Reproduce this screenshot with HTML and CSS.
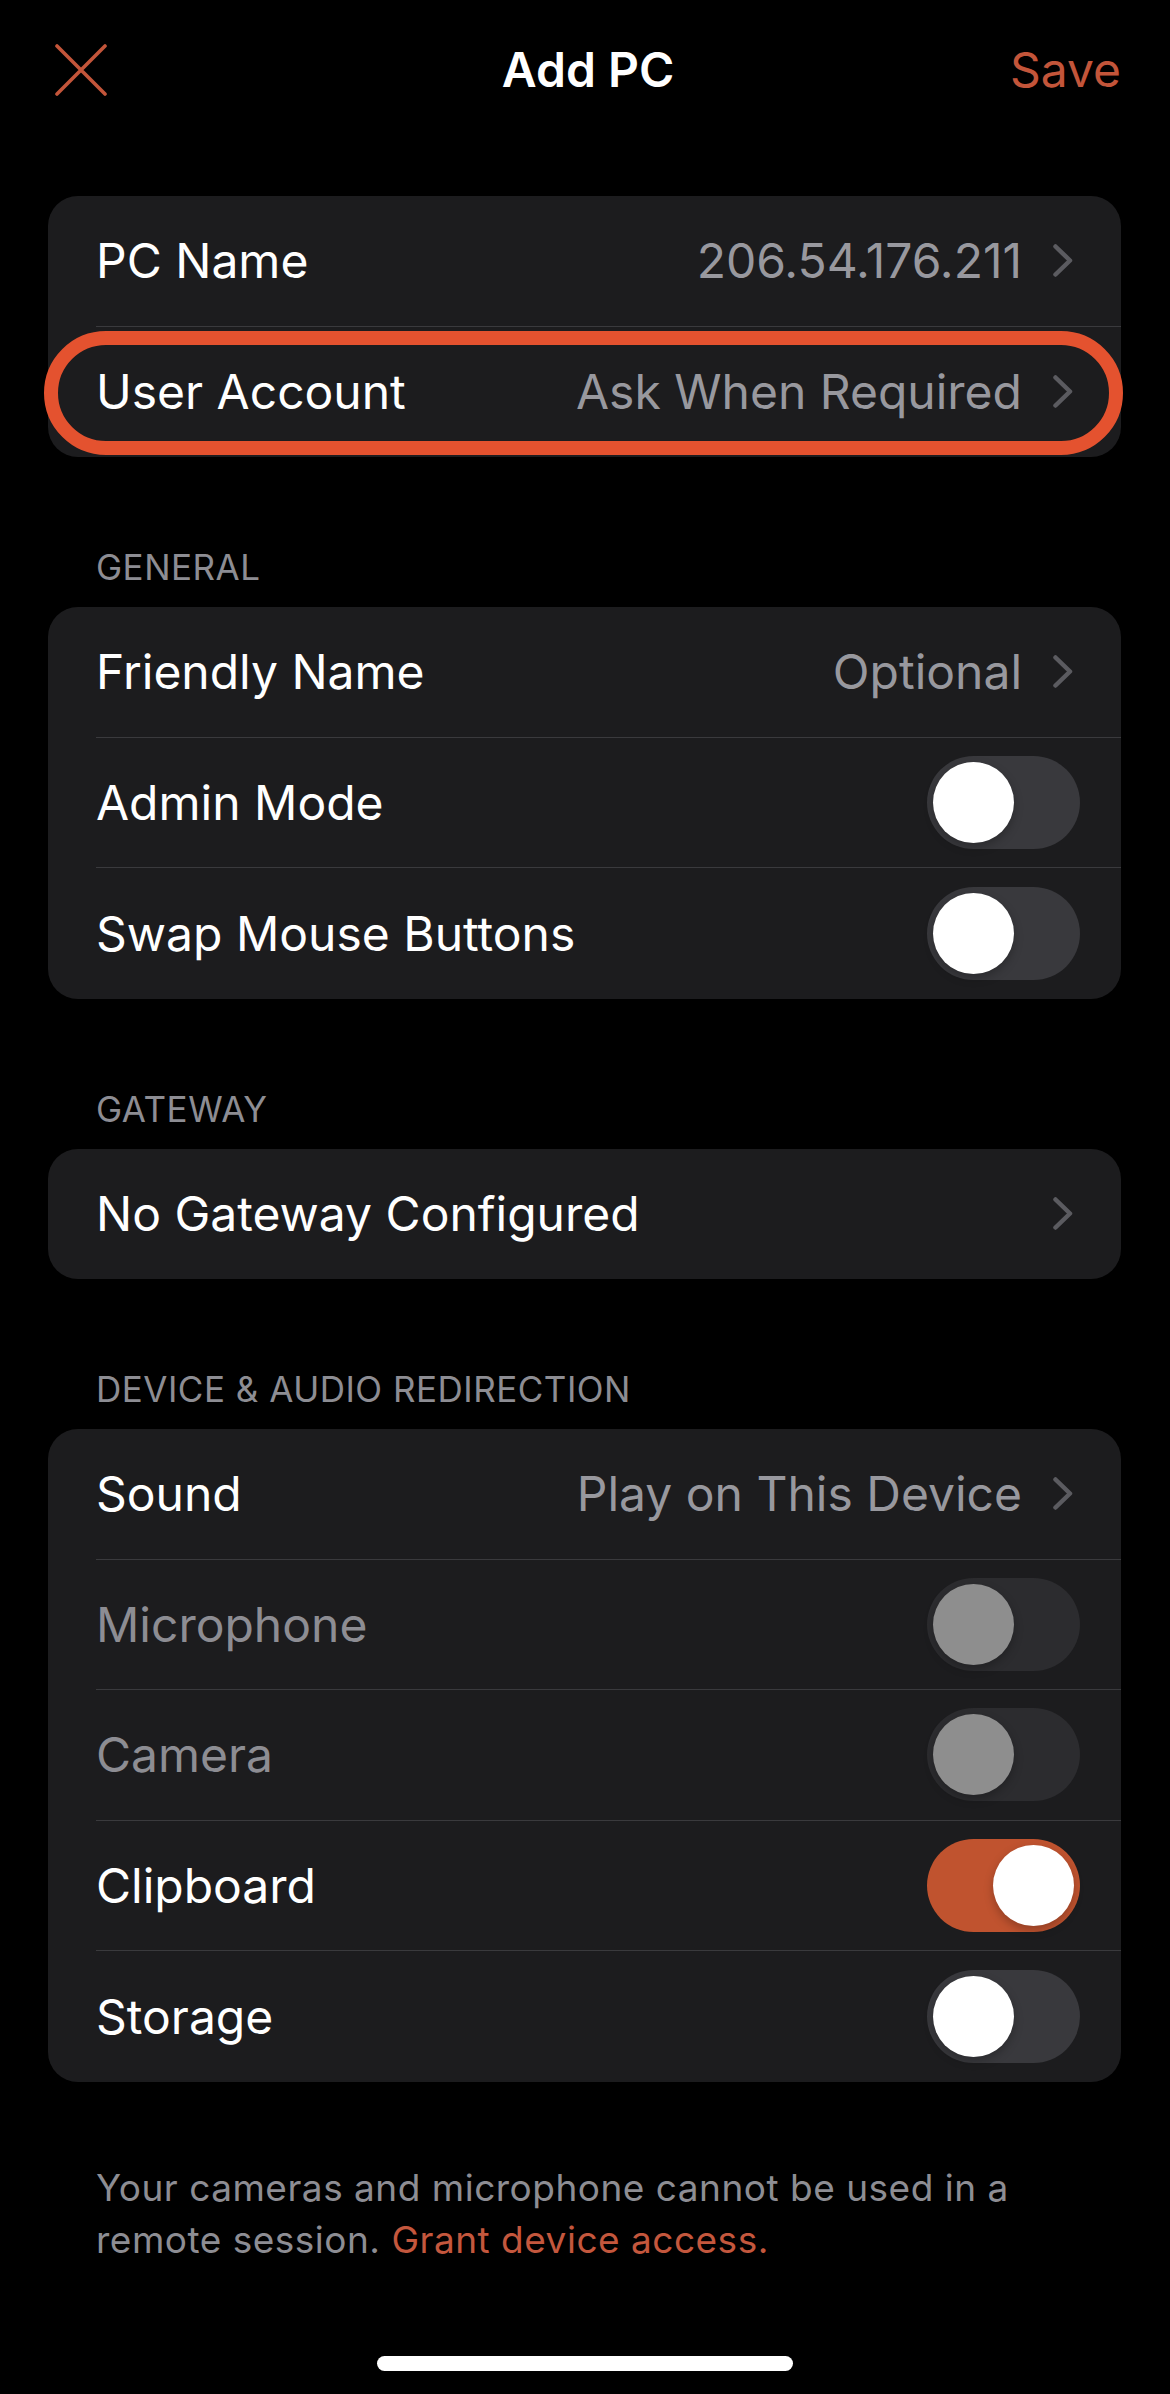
FILE: index.html
```html
<!DOCTYPE html>
<html lang="en">
<head>
  <meta charset="UTF-8">
  <meta name="viewport" content="width=device-width, initial-scale=1.0">
  <title>Add PC</title>
  <link rel="stylesheet" href="styles.css">
</head>
<body>
  <div class="screen">
    <header class="nav">
      <button class="nav-close" aria-label="Close">
        <svg width="52" height="52" viewBox="0 0 52 52">
          <path d="M2 2 L50 50 M50 2 L2 50" stroke="currentColor" stroke-width="3.6" stroke-linecap="round" fill="none"/>
        </svg>
      </button>
      <h1 class="nav-title">Add PC</h1>
      <button class="nav-save">Save</button>
    </header>

    <section class="group group-first">
      <div class="card">
        <div class="row">
          <div class="row-inner">
            <span class="row-label">PC Name</span>
            <span class="row-value">206.54.176.211</span>
            <svg class="chevron" width="20" height="33" viewBox="0 0 20 33"><polyline points="2.5,2.5 17,16.5 2.5,30.5"/></svg>
          </div>
        </div>
        <div class="row row-marked">
          <div class="row-inner">
            <span class="row-label">User Account</span>
            <span class="row-value">Ask When Required</span>
            <svg class="chevron" width="20" height="33" viewBox="0 0 20 33"><polyline points="2.5,2.5 17,16.5 2.5,30.5"/></svg>
          </div>
          <span class="highlight"></span>
        </div>
      </div>
    </section>

    <section class="group">
      <h2 class="group-title">GENERAL</h2>
      <div class="card">
        <div class="row">
          <div class="row-inner">
            <span class="row-label">Friendly Name</span>
            <span class="row-value">Optional</span>
            <svg class="chevron" width="20" height="33" viewBox="0 0 20 33"><polyline points="2.5,2.5 17,16.5 2.5,30.5"/></svg>
          </div>
        </div>
        <div class="row">
          <div class="row-inner">
            <span class="row-label">Admin Mode</span>
            <span class="toggle"><span class="toggle-knob"></span></span>
          </div>
        </div>
        <div class="row">
          <div class="row-inner">
            <span class="row-label">Swap Mouse Buttons</span>
            <span class="toggle"><span class="toggle-knob"></span></span>
          </div>
        </div>
      </div>
    </section>

    <section class="group">
      <h2 class="group-title">GATEWAY</h2>
      <div class="card">
        <div class="row">
          <div class="row-inner">
            <span class="row-label">No Gateway Configured</span>
            <span class="row-value"></span>
            <svg class="chevron" width="20" height="33" viewBox="0 0 20 33"><polyline points="2.5,2.5 17,16.5 2.5,30.5"/></svg>
          </div>
        </div>
      </div>
    </section>

    <section class="group">
      <h2 class="group-title">DEVICE &amp; AUDIO REDIRECTION</h2>
      <div class="card">
        <div class="row">
          <div class="row-inner">
            <span class="row-label">Sound</span>
            <span class="row-value">Play on This Device</span>
            <svg class="chevron" width="20" height="33" viewBox="0 0 20 33"><polyline points="2.5,2.5 17,16.5 2.5,30.5"/></svg>
          </div>
        </div>
        <div class="row row-disabled">
          <div class="row-inner">
            <span class="row-label">Microphone</span>
            <span class="toggle toggle-disabled"><span class="toggle-knob"></span></span>
          </div>
        </div>
        <div class="row row-disabled">
          <div class="row-inner">
            <span class="row-label">Camera</span>
            <span class="toggle toggle-disabled"><span class="toggle-knob"></span></span>
          </div>
        </div>
        <div class="row">
          <div class="row-inner">
            <span class="row-label">Clipboard</span>
            <span class="toggle toggle-on"><span class="toggle-knob"></span></span>
          </div>
        </div>
        <div class="row">
          <div class="row-inner">
            <span class="row-label">Storage</span>
            <span class="toggle"><span class="toggle-knob"></span></span>
          </div>
        </div>
      </div>
    </section>

    <p class="footer-note">Your cameras and microphone cannot be used in a remote session. <a href="#" class="footer-link">Grant device access.</a></p>

    <div class="home-indicator"></div>
  </div>
</body>
</html>
```

FILE: styles.css
```css
body {
  margin: 0;
  background: #000;
  color: #fff;
  font-family: 'Inter', 'Roboto', sans-serif;
}
.screen {
  min-height: 2394px;
  display: flex;
  flex-direction: column;
}

/* nav bar */
.nav {
  height: 140px;
  display: grid;
  grid-template-columns: 1fr auto 1fr;
  align-items: center;
  padding: 0 49px 0 55px;
}
.nav button {
  background: none;
  border: none;
  padding: 0;
  font-family: inherit;
  color: #c3553a;
  cursor: pointer;
}
.nav-close {
  justify-self: start;
  display: flex;
}
.nav-title {
  margin: 0;
  font-size: 48px;
  font-weight: 600;
  line-height: 58px;
}
.nav-save {
  justify-self: end;
  font-size: 48px;
  line-height: 58px;
}

/* grouped list */
.group-first {
  margin-top: 56px;
}
.group-title {
  margin: 0;
  padding: 89px 48px 19px 96px;
  font-size: 35px;
  line-height: 42px;
  font-weight: 400;
  letter-spacing: 0.5px;
  color: #8d8d93;
}
.card {
  margin: 0 49px 0 48px;
  background: #1c1c1e;
  border-radius: 30px;
}
.row {
  position: relative;
  padding-left: 48px;
}
.row-inner {
  height: 130.5px;
  box-sizing: border-box;
  display: flex;
  align-items: center;
  padding-right: 41px;
  border-bottom: 1px solid #3a3a3d;
}
.row:last-child .row-inner {
  border-bottom: none;
}
.row-label {
  font-size: 48px;
  white-space: nowrap;
}
.row-value {
  flex: 1;
  text-align: right;
  font-size: 48px;
  color: #98989e;
  white-space: nowrap;
}
.chevron {
  margin: 0 7px 0 31px;
  fill: none;
  stroke: #5b5b60;
  stroke-width: 4.5;
  stroke-linecap: round;
  stroke-linejoin: round;
}
.row-disabled .row-label {
  color: #8d8d93;
}

/* marker drawn over the User Account row */
.highlight {
  position: absolute;
  left: -4px;
  right: -2px;
  top: 4px;
  bottom: 2px;
  border: 14px solid #e4522f;
  border-radius: 999px;
  pointer-events: none;
}

/* switches */
.toggle {
  margin-left: auto;
  width: 153px;
  height: 93px;
  box-sizing: border-box;
  padding: 6px;
  border-radius: 47px;
  background: #39393d;
  display: flex;
}
.toggle-knob {
  width: 81px;
  height: 81px;
  border-radius: 50%;
  background: #fff;
  box-shadow: 0 4px 10px rgba(0, 0, 0, 0.25);
}
.toggle-on {
  background: #c0532f;
  justify-content: flex-end;
}
.toggle-disabled {
  background: #2c2c2f;
}
.toggle-disabled .toggle-knob {
  background: #8e8e8e;
}

/* footer */
.footer-note {
  margin: 80px 110px 0 96px;
  font-size: 37px;
  line-height: 52px;
  letter-spacing: 0.5px;
  color: #8d8d93;
}
.footer-link {
  color: #c4573d;
  text-decoration: none;
}
.home-indicator {
  margin: auto auto 23px;
  width: 416px;
  height: 15px;
  border-radius: 8px;
  background: #fff;
}
```
